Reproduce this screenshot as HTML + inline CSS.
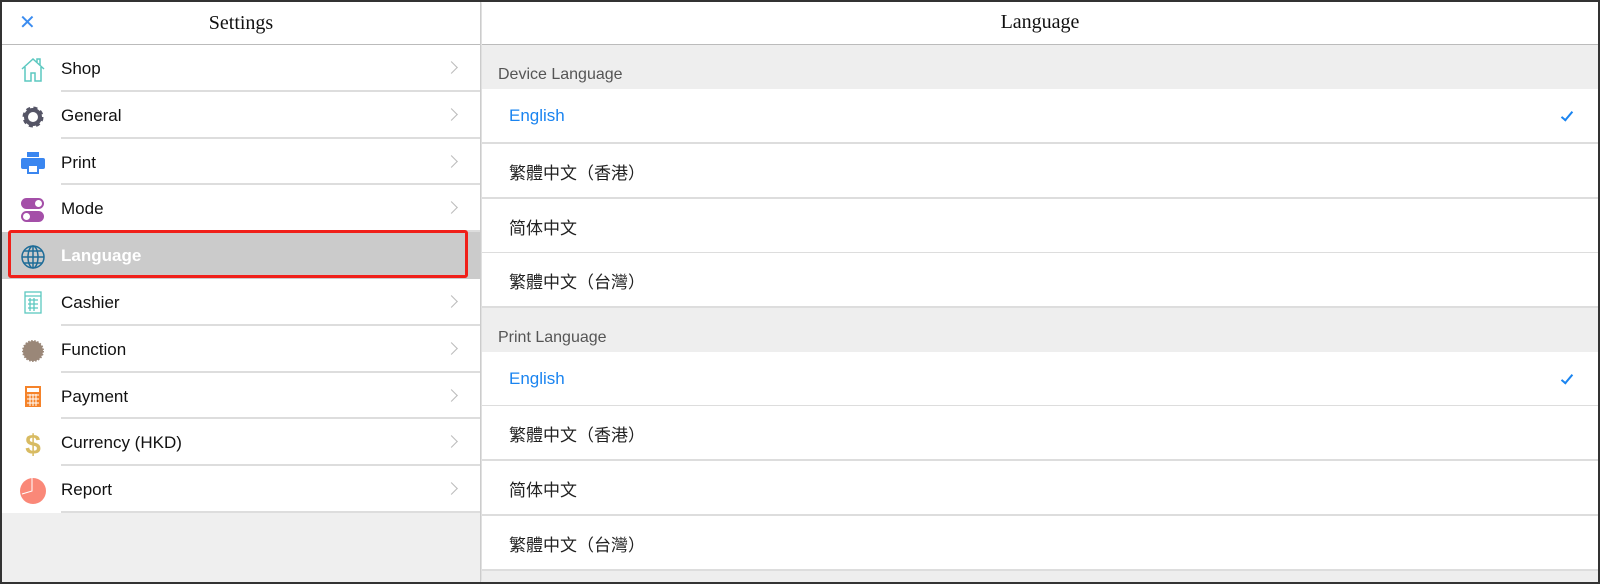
<!DOCTYPE html>
<html><head><meta charset="utf-8"><style>
*{margin:0;padding:0;box-sizing:border-box}
body{width:1600px;height:584px;overflow:hidden;background:#fff;font-family:"Liberation Sans","Noto Sans CJK TC",sans-serif;position:relative}
.frame{position:absolute;left:0;top:0;width:1600px;height:584px;border:2px solid #333;}
.left{position:absolute;left:2px;top:2px;width:479px;height:580px;background:#efefef;border-right:1px solid #ccc;box-shadow:2px 0 3px rgba(0,0,0,.15)}
.lh{height:43px;background:#fff;border-bottom:1px solid #bbb;text-align:center;font-family:"Liberation Serif",serif;font-size:20px;line-height:42px;color:#111;position:relative}
.lh .x{position:absolute;left:17px;top:0;color:#3b8cf0;font-family:"Liberation Sans",sans-serif;font-size:20px}
.row{height:46.8px;background:#fff;position:relative;font-size:17px;color:#111}
.row .t{position:absolute;left:59px;top:0;line-height:48px}
.row .ln{position:absolute;left:59px;right:0;bottom:0;height:2px;background:#ddd}
.row .ch{position:absolute;left:445px;top:18px;width:9px;height:9px;border-top:1.5px solid #bbb;border-right:1.5px solid #bbb;transform:rotate(45deg)}
.row svg{position:absolute;left:18px;top:12px}
.sel{background:#cbcbcb;color:#fff;font-weight:bold}
.red{position:absolute;left:8px;top:230px;width:460px;height:48px;border:3px solid #f0201a;border-radius:3px}
.rh{position:absolute;left:482px;top:2px;width:1116px;height:43px;border-bottom:1px solid #bbb;text-align:center;font-family:"Liberation Serif",serif;font-size:20px;line-height:40px;color:#111;background:#fff}
.sec{position:absolute;left:482px;width:1116px;height:44px;background:#eee;font-size:16px;color:#555;padding-left:16px;line-height:60px}
.it{position:absolute;left:482px;width:1116px;height:55px;background:#fff;font-size:17px;color:#222;padding-left:27px;line-height:53px}
.it.c{line-height:60px}
.it::after{content:"";position:absolute;left:0;right:0;bottom:0;height:2px;background:#ddd}
.it.b{color:#1a84f0}
.ck{position:absolute;right:28px;top:20px;width:6px;height:12px;border-right:2px solid #1a84f0;border-bottom:2px solid #1a84f0;transform:rotate(40deg)}
</style></head><body>
<div class="left">
<div class="lh"><span class="x">✕</span>Settings</div>
<div class="row"><svg width="26" height="26" viewBox="0 0 26 26"><path d="M2 12L13 2l11 10M5 10v14h6v-8h4v8h6V10M17 5V2h3v6" fill="none" stroke="#5cc8c0" stroke-width="1.5"/></svg><span class="t">Shop</span><i class="ch"></i><i class="ln"></i></div>
<div class="row"><svg width="26" height="26" viewBox="0 0 26 26"><circle cx="13" cy="13" r="8" fill="none" stroke="#555566" stroke-width="5" stroke-dasharray="3.5 2.8"/><circle cx="13" cy="13" r="7" fill="none" stroke="#555566" stroke-width="4"/></svg><span class="t">General</span><i class="ch"></i><i class="ln"></i></div>
<div class="row"><svg width="26" height="26" viewBox="0 0 26 26"><rect x="7" y="1" width="12" height="5" fill="#3a86f0"/><rect x="1" y="7" width="24" height="11" rx="2" fill="#3a86f0"/><rect x="7" y="14" width="12" height="9" fill="#3a86f0"/><rect x="9" y="15" width="8" height="6" fill="#fff"/></svg><span class="t">Print</span><i class="ch"></i><i class="ln"></i></div>
<div class="row"><svg width="26" height="26" viewBox="0 0 26 26"><rect x="1" y="1" width="23" height="11" rx="5.5" fill="#a44fa8"/><circle cx="18.5" cy="6.5" r="3.5" fill="#fff"/><rect x="1" y="14" width="23" height="11" rx="5.5" fill="#a44fa8"/><circle cx="6.5" cy="19.5" r="3.5" fill="#fff"/></svg><span class="t">Mode</span><i class="ch"></i><i class="ln"></i></div>
<div class="row sel"><svg width="26" height="26" viewBox="0 0 26 26" fill="none" stroke="#1e6c98" stroke-width="1.5"><circle cx="13" cy="13" r="11"/><ellipse cx="13" cy="13" rx="5" ry="11"/><path d="M2 13h22M13 2v22M4 7h18M4 19h18"/></svg><span class="t">Language</span></div>
<div class="row"><svg width="26" height="26" viewBox="0 0 26 26" fill="none" stroke="#5cc8c0" stroke-width="1.3"><rect x="5" y="1" width="16" height="21"/><path d="M5 5h16M8 9h10M8 13h10M8 17h10M10 7v13M14 7v13"/></svg><span class="t">Cashier</span><i class="ch"></i><i class="ln"></i></div>
<div class="row"><svg width="26" height="26" viewBox="0 0 26 26"><circle cx="13" cy="13" r="10" fill="#9a8778" stroke="#9a8778" stroke-width="2" stroke-dasharray="1.5 1.5"/></svg><span class="t">Function</span><i class="ch"></i><i class="ln"></i></div>
<div class="row"><svg width="26" height="26" viewBox="0 0 26 26"><rect x="5" y="1" width="16" height="21" fill="#f5832a"/><rect x="7" y="3" width="12" height="4" fill="#fff"/><path d="M7 10h12M7 14h12M7 18h12M10 9v12M13 9v12M16 9v12" stroke="#fff" stroke-width="1"/></svg><span class="t">Payment</span><i class="ch"></i><i class="ln"></i></div>
<div class="row"><svg width="26" height="28" viewBox="0 0 26 28" style="top:10px"><text x="13" y="25" text-anchor="middle" font-family="Liberation Sans" font-weight="bold" font-size="28" fill="#d8bb62">$</text></svg><span class="t">Currency (HKD)</span><i class="ch"></i><i class="ln"></i></div>
<div class="row"><svg width="28" height="28" viewBox="0 0 28 28" style="left:17px;top:11px"><circle cx="14" cy="14" r="13" fill="#fa8878"/><path d="M13 1v13l-10 3" fill="none" stroke="#fff" stroke-width="1"/></svg><span class="t">Report</span><i class="ch"></i><i class="ln"></i></div>
</div>
<div class="red"></div>
<div class="rh">Language</div>
<div class="sec" style="top:45px">Device Language</div>
<div class="it b" style="top:89px">English<i class="ck"></i></div>
<div class="it c" style="top:144px">繁體中文（香港）</div>
<div class="it c" style="top:199px">简体中文</div>
<div class="it c" style="top:253px">繁體中文（台灣）</div>
<div class="sec" style="top:308px">Print Language</div>
<div class="it b" style="top:352px">English<i class="ck"></i></div>
<div class="it c" style="top:406px">繁體中文（香港）</div>
<div class="it c" style="top:461px">简体中文</div>
<div class="it c" style="top:516px">繁體中文（台灣）</div>
<div style="position:absolute;left:482px;top:571px;width:1116px;height:11px;background:#eee"></div>
<div class="frame"></div>
</body></html>
